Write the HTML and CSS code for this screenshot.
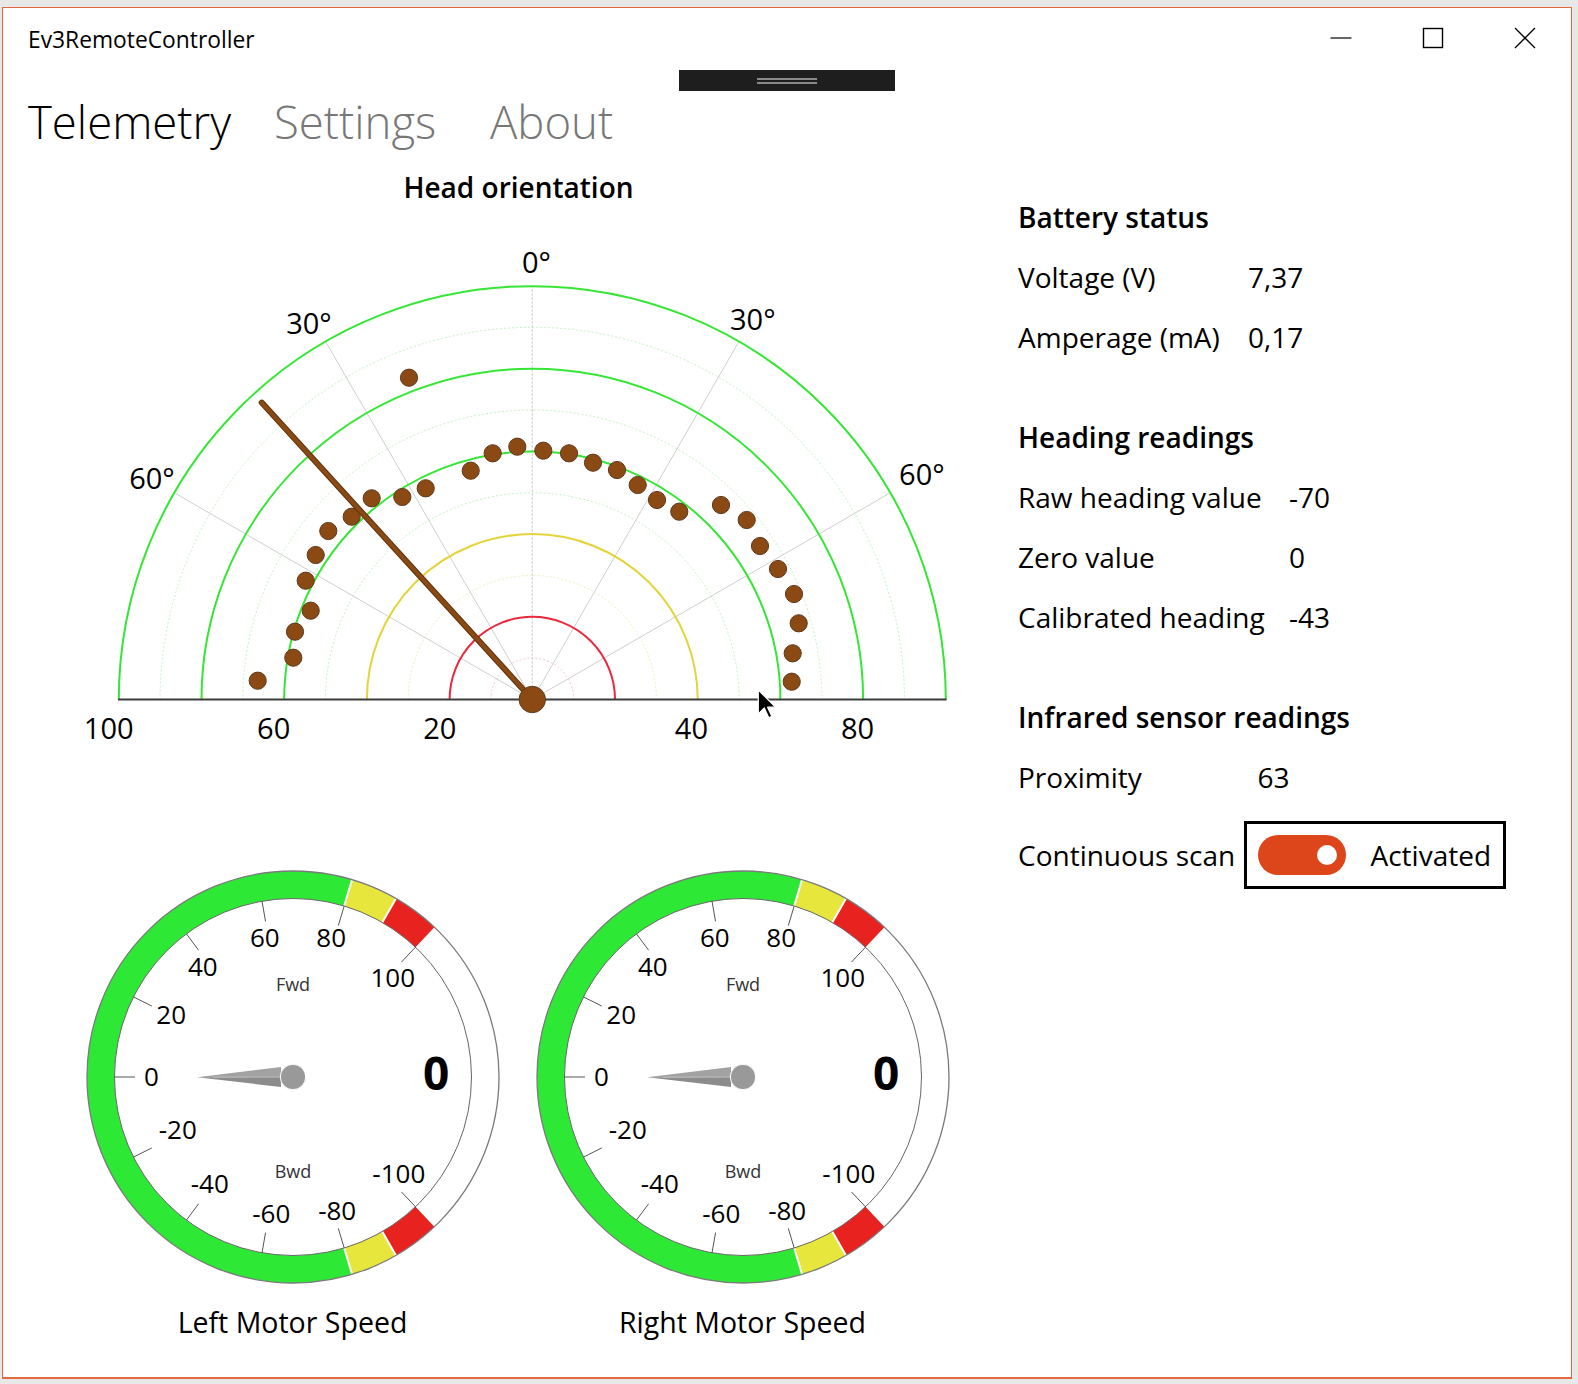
FILE: index.html
```html
<!DOCTYPE html>
<html lang="en">
<head>
<meta charset="utf-8">
<title>Ev3RemoteController</title>
<link rel="stylesheet" href="styles.css">
</head>
<body>
<div class="window">
  <header class="titlebar">
    <span class="title">Ev3RemoteController</span>
    <div class="controls">
      <span class="ctl"><svg width="22" height="22" viewBox="0 0 22 22"><line x1="0.5" y1="11" x2="21.5" y2="11" stroke="#000" stroke-width="1.2"/></svg></span>
      <span class="ctl"><svg width="22" height="22" viewBox="0 0 22 22"><rect x="1.5" y="1.5" width="19" height="19" fill="none" stroke="#000" stroke-width="1.4"/></svg></span>
      <span class="ctl"><svg width="22" height="22" viewBox="0 0 22 22"><path d="M1 1 L21 21 M21 1 L1 21" stroke="#000" stroke-width="1.3"/></svg></span>
    </div>
  </header>
  <div class="handle"><span></span><span></span></div>
  <nav class="pivot">
    <span class="tab active">Telemetry</span>
    <span class="tab">Settings</span>
    <span class="tab">About</span>
  </nav>
  <main class="content">
    <section class="left">
      <h2 class="chart-title">Head orientation</h2>
      <svg class="polar" viewBox="3 214 1000 643" width="1000" height="643">
        <g class="faint">
          <path class="fg" d="M160.1 699.5 A372.2 372.2 0 0 1 904.5 699.5"/>
          <path class="fg" d="M242.8 699.5 A289.5 289.5 0 0 1 821.8 699.5"/>
          <path class="fg" d="M325.5 699.5 A206.8 206.8 0 0 1 739.1 699.5"/>
          <path class="fy" d="M408.3 699.5 A124 124 0 0 1 656.3 699.5"/>
          <path class="fr" d="M490.9 699.5 A41.4 41.4 0 0 1 573.7 699.5"/>
        </g>
        <g class="spokes">
          <line x1="532.3" y1="699.5" x2="325.55" y2="341.4"/>
          <line x1="532.3" y1="699.5" x2="739.05" y2="341.4"/>
          <line x1="532.3" y1="699.5" x2="174.2" y2="492.75"/>
          <line x1="532.3" y1="699.5" x2="890.4" y2="492.75"/>
          <line class="vert" x1="532.3" y1="699.5" x2="532.3" y2="286"/>
        </g>
        <g class="rings">
          <path class="rg" d="M118.8 699.5 A413.5 413.5 0 0 1 945.8 699.5"/>
          <path class="rg" d="M201.5 699.5 A330.8 330.8 0 0 1 863.1 699.5"/>
          <path class="rg" d="M284.2 699.5 A248.1 248.1 0 0 1 780.4 699.5"/>
          <path class="ry" d="M366.9 699.5 A165.4 165.4 0 0 1 697.7 699.5"/>
          <path class="rr" d="M449.6 699.5 A82.7 82.7 0 0 1 615 699.5"/>
        </g>
        <line class="base" x1="118" y1="699.5" x2="946.5" y2="699.5"/>
        <g class="dots">
          <circle cx="409" cy="377.7" r="8.6"/>
          <circle cx="470.7" cy="470.7" r="8.6"/>
          <circle cx="492.7" cy="453.3" r="8.6"/>
          <circle cx="517.3" cy="446.7" r="8.6"/>
          <circle cx="543.3" cy="450.7" r="8.6"/>
          <circle cx="425.7" cy="488.3" r="8.6"/>
          <circle cx="402.3" cy="497" r="8.6"/>
          <circle cx="371.7" cy="498.3" r="8.6"/>
          <circle cx="351.7" cy="516.7" r="8.6"/>
          <circle cx="328.3" cy="531" r="8.6"/>
          <circle cx="315.7" cy="555" r="8.6"/>
          <circle cx="305.7" cy="580.7" r="8.6"/>
          <circle cx="310.7" cy="610.7" r="8.6"/>
          <circle cx="295" cy="631.7" r="8.6"/>
          <circle cx="293.3" cy="657.7" r="8.6"/>
          <circle cx="257.7" cy="680.7" r="8.6"/>
          <circle cx="569" cy="453.3" r="8.6"/>
          <circle cx="593" cy="462.7" r="8.6"/>
          <circle cx="617" cy="470" r="8.6"/>
          <circle cx="637.7" cy="485" r="8.6"/>
          <circle cx="657" cy="500" r="8.6"/>
          <circle cx="679.3" cy="511.7" r="8.6"/>
          <circle cx="721" cy="505" r="8.6"/>
          <circle cx="746.7" cy="520" r="8.6"/>
          <circle cx="760" cy="546" r="8.6"/>
          <circle cx="778" cy="569" r="8.6"/>
          <circle cx="794" cy="594" r="8.6"/>
          <circle cx="798.7" cy="623.3" r="8.6"/>
          <circle cx="792.7" cy="653.3" r="8.6"/>
          <circle cx="791.7" cy="681.7" r="8.6"/>
        </g>
        <line class="needle-edge" x1="532.3" y1="699.5" x2="261.7" y2="402.6"/>
        <line class="needle" x1="532.3" y1="699.5" x2="261.7" y2="402.6"/>
        <circle class="hubdot" cx="532.3" cy="699.5" r="13.2"/>
        <g class="plabels">
          <text x="536.4" y="261">0°</text>
          <text x="309" y="322">30°</text>
          <text x="752.8" y="318">30°</text>
          <text x="152" y="477">60°</text>
          <text x="921.9" y="473">60°</text>
          <text x="108.7" y="727.6">100</text>
          <text x="273.7" y="727.6">60</text>
          <text x="439.8" y="727.6">20</text>
          <text x="691.4" y="727.6">40</text>
          <text x="857.5" y="727.6">80</text>
        </g>
        <path class="cursor" d="M758.3 690 V714 L764.3 708 L768.8 717.7 L771.8 716.2 L767.6 707.2 H775.5 Z"/>
      </svg>
      <div class="gauges">
        <figure class="gauge">
          <svg class="dial" viewBox="-220 -220 440 440" width="440" height="440">
            <path class="bg" d="M59.08 -197.35 A206 206 0 1 0 59.08 197.35 L51.19 171 A178.5 178.5 0 1 1 51.19 -171 Z"/>
            <path class="by" d="M59.08 -197.35 A206 206 0 0 1 103 -178.4 L89.25 -154.59 A178.5 178.5 0 0 0 51.19 -171 Z"/>
            <path class="br" d="M103 -178.4 A206 206 0 0 1 141.37 -149.84 L122.49 -129.84 A178.5 178.5 0 0 0 89.25 -154.59 Z"/>
            <path class="by" d="M59.08 197.35 A206 206 0 0 0 103 178.4 L89.25 154.59 A178.5 178.5 0 0 1 51.19 171 Z"/>
            <path class="br" d="M103 178.4 A206 206 0 0 0 141.37 149.84 L122.49 129.84 A178.5 178.5 0 0 1 89.25 154.59 Z"/>
            <g class="sep">
              <line x1="51.19" y1="-171" x2="59.08" y2="-197.35"/>
              <line x1="89.25" y1="-154.59" x2="103" y2="-178.4"/>
              <line x1="51.19" y1="171" x2="59.08" y2="197.35"/>
              <line x1="89.25" y1="154.59" x2="103" y2="178.4"/>
            </g>
            <circle class="rim" r="206"/>
            <circle class="inner" r="178.5"/>
            <g class="ticks">
              <line x1="122.49" y1="-129.84" x2="108.43" y2="-114.92"/>
              <line x1="51.19" y1="-171" x2="45.31" y2="-151.36"/>
              <line x1="-31" y1="-175.79" x2="-27.44" y2="-155.6"/>
              <line x1="-106.59" y1="-143.18" x2="-94.35" y2="-126.73"/>
              <line x1="-159.51" y1="-80.11" x2="-141.19" y2="-70.91"/>
              <line x1="-178.5" y1="0" x2="-158" y2="0"/>
              <line x1="-159.51" y1="80.11" x2="-141.19" y2="70.91"/>
              <line x1="-106.59" y1="143.18" x2="-94.35" y2="126.73"/>
              <line x1="-31" y1="175.79" x2="-27.44" y2="155.6"/>
              <line x1="51.19" y1="171" x2="45.31" y2="151.36"/>
              <line x1="122.49" y1="129.84" x2="108.43" y2="114.92"/>
            </g>
            <g class="glabels">
              <text x="-28.2" y="-139.7">60</text>
              <text x="38.2" y="-139.7">80</text>
              <text x="-90.2" y="-111">40</text>
              <text x="99.8" y="-100.3">100</text>
              <text x="-121.8" y="-63">20</text>
              <text x="-141.5" y="-1">0</text>
              <text x="-115.2" y="52.3">-20</text>
              <text x="-83.2" y="105.7">-40</text>
              <text x="-21.8" y="136.3">-60</text>
              <text x="44.2" y="133">-80</text>
              <text x="105.8" y="96.3">-100</text>
            </g>
            <text class="dir" x="0" y="-93">Fwd</text>
            <text class="dir" x="0" y="94">Bwd</text>
            <text class="val" x="143.2" y="-5">0</text>
            <polygon class="nd-top" points="-96,0.3 -12,-10 -12,0"/>
            <polygon class="nd-bot" points="-96,0.3 -12,0 -12,10"/>
            <line class="nd-hl" x1="-80" y1="0.2" x2="-12" y2="0"/>
            <circle class="hub" r="12.7"/>
          </svg>
          <figcaption>Left Motor Speed</figcaption>
        </figure>
        <figure class="gauge">
          <svg class="dial" viewBox="-220 -220 440 440" width="440" height="440">
            <path class="bg" d="M59.08 -197.35 A206 206 0 1 0 59.08 197.35 L51.19 171 A178.5 178.5 0 1 1 51.19 -171 Z"/>
            <path class="by" d="M59.08 -197.35 A206 206 0 0 1 103 -178.4 L89.25 -154.59 A178.5 178.5 0 0 0 51.19 -171 Z"/>
            <path class="br" d="M103 -178.4 A206 206 0 0 1 141.37 -149.84 L122.49 -129.84 A178.5 178.5 0 0 0 89.25 -154.59 Z"/>
            <path class="by" d="M59.08 197.35 A206 206 0 0 0 103 178.4 L89.25 154.59 A178.5 178.5 0 0 1 51.19 171 Z"/>
            <path class="br" d="M103 178.4 A206 206 0 0 0 141.37 149.84 L122.49 129.84 A178.5 178.5 0 0 1 89.25 154.59 Z"/>
            <g class="sep">
              <line x1="51.19" y1="-171" x2="59.08" y2="-197.35"/>
              <line x1="89.25" y1="-154.59" x2="103" y2="-178.4"/>
              <line x1="51.19" y1="171" x2="59.08" y2="197.35"/>
              <line x1="89.25" y1="154.59" x2="103" y2="178.4"/>
            </g>
            <circle class="rim" r="206"/>
            <circle class="inner" r="178.5"/>
            <g class="ticks">
              <line x1="122.49" y1="-129.84" x2="108.43" y2="-114.92"/>
              <line x1="51.19" y1="-171" x2="45.31" y2="-151.36"/>
              <line x1="-31" y1="-175.79" x2="-27.44" y2="-155.6"/>
              <line x1="-106.59" y1="-143.18" x2="-94.35" y2="-126.73"/>
              <line x1="-159.51" y1="-80.11" x2="-141.19" y2="-70.91"/>
              <line x1="-178.5" y1="0" x2="-158" y2="0"/>
              <line x1="-159.51" y1="80.11" x2="-141.19" y2="70.91"/>
              <line x1="-106.59" y1="143.18" x2="-94.35" y2="126.73"/>
              <line x1="-31" y1="175.79" x2="-27.44" y2="155.6"/>
              <line x1="51.19" y1="171" x2="45.31" y2="151.36"/>
              <line x1="122.49" y1="129.84" x2="108.43" y2="114.92"/>
            </g>
            <g class="glabels">
              <text x="-28.2" y="-139.7">60</text>
              <text x="38.2" y="-139.7">80</text>
              <text x="-90.2" y="-111">40</text>
              <text x="99.8" y="-100.3">100</text>
              <text x="-121.8" y="-63">20</text>
              <text x="-141.5" y="-1">0</text>
              <text x="-115.2" y="52.3">-20</text>
              <text x="-83.2" y="105.7">-40</text>
              <text x="-21.8" y="136.3">-60</text>
              <text x="44.2" y="133">-80</text>
              <text x="105.8" y="96.3">-100</text>
            </g>
            <text class="dir" x="0" y="-93">Fwd</text>
            <text class="dir" x="0" y="94">Bwd</text>
            <text class="val" x="143.2" y="-5">0</text>
            <polygon class="nd-top" points="-96,0.3 -12,-10 -12,0"/>
            <polygon class="nd-bot" points="-96,0.3 -12,0 -12,10"/>
            <line class="nd-hl" x1="-80" y1="0.2" x2="-12" y2="0"/>
            <circle class="hub" r="12.7"/>
          </svg>
          <figcaption>Right Motor Speed</figcaption>
        </figure>
      </div>
    </section>
    <aside class="right">
      <section class="group">
        <h3>Battery status</h3>
        <div class="row"><span>Voltage (V)</span><span>7,37</span></div>
        <div class="row"><span>Amperage (mA)</span><span>0,17</span></div>
      </section>
      <section class="group">
        <h3>Heading readings</h3>
        <div class="row wide"><span>Raw heading value</span><span>-70</span></div>
        <div class="row wide"><span>Zero value</span><span>0</span></div>
        <div class="row wide"><span>Calibrated heading</span><span>-43</span></div>
      </section>
      <section class="group">
        <h3>Infrared sensor readings</h3>
        <div class="row ir"><span>Proximity</span><span class="prox">63</span></div>
        <div class="row ir scan"><span>Continuous scan</span>
          <div class="switch-box">
            <span class="switch"><span class="knob"></span></span>
            <span class="switch-text">Activated</span>
          </div>
        </div>
      </section>
    </aside>
  </main>
</div>
</body>
</html>
```
FILE: styles.css
```css
html, body {
  margin: 0;
  padding: 0;
}
body {
  background: #e8e8e8;
  font-family: "Open Sans", "Noto Sans", "Liberation Sans", sans-serif;
  color: #000;
  width: 1578px;
  height: 1384px;
  overflow: hidden;
}
.window {
  position: relative;
  box-sizing: border-box;
  width: 1570px;
  height: 1372px;
  margin: 7px 0 0 2px;
  background: #fff;
  border: 1px solid #e2693f;
  border-bottom-width: 2px;
  display: flex;
  flex-direction: column;
  overflow: hidden;
}
.titlebar {
  display: flex;
  justify-content: space-between;
  height: 64px;
  flex: none;
}
.title {
  font-size: 22.8px;
  line-height: 64px;
  padding-left: 25px;
}
.controls {
  display: flex;
}
.ctl {
  width: 92px;
  height: 60px;
  display: flex;
  align-items: center;
  justify-content: center;
}
.ctl svg {
  display: block;
}
.handle {
  position: absolute;
  left: 676px;
  top: 62px;
  width: 216px;
  height: 21px;
  background: #1e1e1e;
  display: flex;
  flex-direction: column;
  align-items: center;
  justify-content: center;
  gap: 2px;
}
.handle span {
  display: block;
  width: 60px;
  height: 2px;
  background: #8a8a8a;
}
.pivot {
  display: flex;
  height: 88px;
  box-sizing: border-box;
  padding: 10px 0 0 25px;
  font-size: 45.5px;
  font-weight: 300;
  line-height: 78px;
  flex: none;
}
.tab {
  color: #777;
}
.tab.active {
  color: #000;
  width: 246px;
}
.tab:nth-child(2) {
  width: 216px;
}
.content {
  display: flex;
  flex: 1;
}
.left {
  width: 1015px;
  flex: none;
}
.chart-title {
  margin: 0;
  font-size: 28px;
  font-weight: 600;
  line-height: 54px;
  text-align: center;
  padding-left: 16px;
}
.polar {
  display: block;
}
.polar .fg, .polar .fy, .polar .fr {
  fill: none;
  stroke-width: 1;
  stroke-dasharray: 2 2;
}
.polar .fg { stroke: #c2f2c2; }
.polar .fy { stroke: #efeec0; }
.polar .fr { stroke: #f6c6cc; }
.polar .spokes line {
  stroke: #cfcfcf;
  stroke-width: 1;
}
.polar .spokes .vert {
  stroke: #bdbdbd;
  stroke-dasharray: 2 2;
}
.polar .rings path {
  fill: none;
  stroke-width: 2;
}
.polar .rg { stroke: #35e635; }
.polar .ry { stroke: #e2d43a; }
.polar .rr { stroke: #ea2a3c; }
.polar .base {
  stroke: #3c3c3c;
  stroke-width: 2;
}
.polar .dots circle {
  fill: #8b4a14;
  stroke: #5e3a1c;
  stroke-width: 1;
}
.polar .needle-edge {
  stroke: #5b3410;
  stroke-width: 6;
  stroke-linecap: round;
}
.polar .needle {
  stroke: #8b4a14;
  stroke-width: 4;
  stroke-linecap: round;
}
.polar .hubdot {
  fill: #8b4a14;
  stroke: #5e3a1c;
  stroke-width: 1;
}
.polar .plabels text {
  font-family: "Open Sans", "Noto Sans", sans-serif;
  font-size: 29px;
  text-anchor: middle;
  dominant-baseline: central;
  fill: #000;
}
.polar .cursor {
  fill: #000;
  stroke: #fff;
  stroke-width: 1.2;
  stroke-linejoin: round;
}
.gauges {
  display: flex;
  gap: 10px;
  padding-left: 69.5px;
}
.gauge {
  margin: 0;
  width: 440px;
}
.gauge svg {
  display: block;
}
.gauge figcaption {
  text-align: center;
  font-size: 28.5px;
  line-height: 50px;
}
.dial .bg { fill: #2de834; }
.dial .by { fill: #e6e63c; }
.dial .br { fill: #e8221e; }
.dial .sep line {
  stroke: #fff;
  stroke-width: 2;
}
.dial .rim {
  fill: none;
  stroke: #7a7a7a;
  stroke-width: 1.3;
}
.dial .inner {
  fill: none;
  stroke: #666;
  stroke-width: 1;
}
.dial .ticks line {
  stroke: #555;
  stroke-width: 1;
}
.dial text {
  font-family: "Open Sans", "Noto Sans", sans-serif;
  text-anchor: middle;
  dominant-baseline: central;
  fill: #000;
}
.dial .glabels text {
  font-size: 26px;
}
.dial .dir {
  font-size: 18px;
  fill: #333;
}
.dial .val {
  font-size: 46px;
  font-weight: 700;
}
.dial .nd-top { fill: #a2a2a2; }
.dial .nd-bot { fill: #8c8c8c; }
.dial .nd-hl {
  stroke: #c9c9c9;
  stroke-width: 0.8;
}
.dial .hub {
  fill: #999;
  stroke: #fff;
  stroke-width: 1;
}
.right {
  flex: 1;
  padding-top: 27.4px;
  font-size: 28px;
}
.group {
  margin-bottom: 40px;
}
.group h3 {
  margin: 0;
  font-size: 28px;
  font-weight: 600;
  line-height: 60px;
}
.row {
  display: grid;
  grid-template-columns: 230px auto;
  height: 60px;
  align-items: center;
  justify-content: start;
  white-space: nowrap;
}
.row.wide {
  grid-template-columns: 271px auto;
}
.row.ir {
  grid-template-columns: 225.5px auto;
}
.prox {
  padding-left: 14px;
}
.row.scan {
  height: 68px;
  margin-top: 14px;
}
.switch-box {
  box-sizing: border-box;
  width: 262px;
  height: 68px;
  border: 3px solid #000;
  display: flex;
  align-items: center;
  padding-left: 11px;
  gap: 25px;
}
.switch {
  position: relative;
  display: block;
  width: 88px;
  height: 40px;
  border-radius: 20px;
  background: #dd451b;
}
.knob {
  position: absolute;
  right: 9px;
  top: 10px;
  width: 20px;
  height: 20px;
  border-radius: 50%;
  background: #fff;
}
.switch-text {
  font-size: 28px;
}
```
